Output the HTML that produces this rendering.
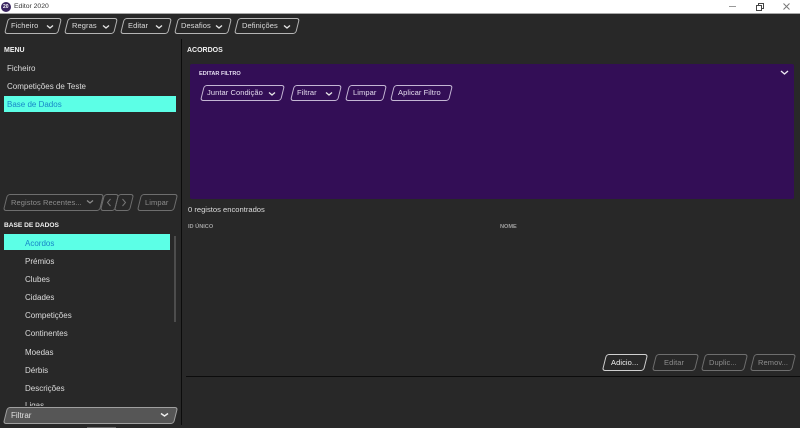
<!DOCTYPE html>
<html lang="pt"><head><meta charset="utf-8"><title>Editor 2020</title>
<style>
html,body{margin:0;padding:0;width:800px;height:428px;overflow:hidden;background:#282828;font-family:"Liberation Sans",sans-serif}
div,span,svg{position:absolute}
.t{white-space:nowrap;font-size:8px;line-height:12px;color:#dcdcdc;margin-top:1px}
.u{font-size:7.5px;letter-spacing:.08px}
.h{white-space:nowrap;font-size:7px;line-height:10px;font-weight:bold;color:#f0f0f0}
.b{border:1px solid #b5b5b5;border-radius:3px;transform:skewX(-14deg);box-sizing:border-box}
.d{border-color:#6e6e6e}
.g{color:#8d8d8d}
.c{fill:none;stroke:#e6e6e6;stroke-width:1.3}
</style></head><body>
<div style="left:0;top:0;width:800px;height:13px;background:#fff"></div>
<div style="left:0;top:13px;width:800px;height:1px;background:#a8a8a8"></div>
<div style="left:1px;top:2px;width:10px;height:10px;border-radius:50%;background:#3a2560"></div>
<span style="left:3px;top:4px;font-size:5px;line-height:6px;color:#fff;font-weight:bold">20</span>
<span style="left:14px;top:1px;font-size:6.8px;line-height:12px;color:#333;white-space:nowrap">Editor 2020</span>
<div style="left:729px;top:6px;width:7px;height:1px;background:#999"></div>
<svg style="left:755px;top:2px" width="10" height="10"><path d="M1.5 3.5h5v5h-5zM3.5 3.5v-2h5v5h-2" fill="none" stroke="#444" stroke-width="1"/></svg>
<svg style="left:782px;top:2px" width="10" height="10"><path d="M1.5 1.5l6 6M7.5 1.5l-6 6" fill="none" stroke="#777" stroke-width="1"/></svg>

<div class="b" style="left:6px;top:18px;width:54px;height:16px"></div><span class="t u" style="left:11px;top:19px">Ficheiro</span>
<svg style="left:46px;top:24px" width="8" height="6"><path class="c" d="M1 1.5l3 2.5 3-2.5"/></svg>
<div class="b" style="left:66px;top:18px;width:50px;height:16px"></div><span class="t u" style="left:72px;top:19px">Regras</span>
<svg style="left:102px;top:24px" width="8" height="6"><path class="c" d="M1 1.5l3 2.5 3-2.5"/></svg>
<div class="b" style="left:122px;top:18px;width:48px;height:16px"></div><span class="t u" style="left:128px;top:19px">Editar</span>
<svg style="left:155px;top:24px" width="8" height="6"><path class="c" d="M1 1.5l3 2.5 3-2.5"/></svg>
<div class="b" style="left:176px;top:18px;width:54px;height:16px"></div><span class="t u" style="left:181px;top:19px">Desafios</span>
<svg style="left:215px;top:24px" width="8" height="6"><path class="c" d="M1 1.5l3 2.5 3-2.5"/></svg>
<div class="b" style="left:236px;top:18px;width:62px;height:16px"></div><span class="t u" style="left:242px;top:19px">Definições</span>
<svg style="left:283px;top:24px" width="8" height="6"><path class="c" d="M1 1.5l3 2.5 3-2.5"/></svg>

<div style="left:181px;top:39px;width:1px;height:386px;background:#0c0c0c"></div>

<span class="h" style="left:4px;top:46px">MENU</span>
<span class="t" style="left:7px;top:62px">Ficheiro</span>
<span class="t" style="left:7px;top:80px">Competições de Teste</span>
<div style="left:4px;top:96px;width:172px;height:16px;background:#5cffe6"></div>
<span class="t" style="left:7px;top:98px;color:#1787c8">Base de Dados</span>

<div class="b d" style="left:5px;top:194px;width:97px;height:17px"></div>
<span class="t u g" style="left:11px;top:196px">Registos Recentes...</span>
<svg style="left:86px;top:199px" width="8" height="6"><path d="M1 1.5l3 2.5 3-2.5" fill="none" stroke="#8d8d8d" stroke-width="1.2"/></svg>
<div class="b d" style="left:102px;top:194px;width:15px;height:17px"></div>
<div class="b d" style="left:116px;top:194px;width:16px;height:17px"></div>
<svg style="left:104px;top:197px" width="10" height="11"><path d="M6.5 2l-3 3.5 3 3.5" fill="none" stroke="#777" stroke-width="1"/></svg>
<svg style="left:119px;top:197px" width="10" height="11"><path d="M3.5 2l3 3.5-3 3.5" fill="none" stroke="#777" stroke-width="1"/></svg>
<div class="b d" style="left:139px;top:194px;width:37px;height:17px"></div>
<span class="t u g" style="left:145px;top:196px">Limpar</span>

<span class="h" style="left:4px;top:221px;font-size:6.6px">BASE DE DADOS</span>
<div style="left:4px;top:234px;width:166px;height:16px;background:#5cffe6"></div>
<span class="t" style="left:25px;top:237px;color:#1787c8">Acordos</span>
<span class="t" style="left:25px;top:255px">Prémios</span>
<span class="t" style="left:25px;top:273px">Clubes</span>
<span class="t" style="left:25px;top:291px">Cidades</span>
<span class="t" style="left:25px;top:309px">Competições</span>
<span class="t" style="left:25px;top:327px">Continentes</span>
<span class="t" style="left:25px;top:346px">Moedas</span>
<span class="t" style="left:25px;top:364px">Dérbis</span>
<span class="t" style="left:25px;top:382px">Descrições</span>
<div style="left:25px;top:402px;width:24px;height:4px;overflow:hidden"><span class="t" style="left:0;top:-3px">Ligas</span></div>
<div style="left:174px;top:236px;width:2px;height:86px;background:#4d4d4d"></div>

<div class="b" style="left:5px;top:407px;width:171px;height:17px;background:#565656;border-color:#a0a0a0"></div>
<span class="t" style="left:11px;top:409px;color:#e0e0e0">Filtrar</span>
<svg style="left:160px;top:412px" width="9" height="6"><path d="M1 1.5l3.5 2.5 3.5-2.5" fill="none" stroke="#f0f0f0" stroke-width="1.4"/></svg>
<div style="left:87px;top:427px;width:29px;height:1px;background:#6a6a6a"></div>

<span class="h" style="left:187px;top:46px">ACORDOS</span>
<div style="left:190px;top:64px;width:604px;height:135px;background:#330e56;border-radius:2px"></div>
<span class="h" style="left:199px;top:69px;font-size:5.6px;color:#e4dcf0">EDITAR FILTRO</span>
<svg style="left:780px;top:70px" width="9" height="6"><path d="M1 1l3.5 3 3.5-3" fill="none" stroke="#ece6f2" stroke-width="1.4"/></svg>
<div class="b" style="left:202px;top:85px;width:81px;height:16px;border-color:#c4b6d4"></div><span class="t u" style="left:207px;top:86px;color:#e4dcee">Juntar Condição</span>
<svg style="left:268px;top:91px" width="8" height="6"><path class="c" d="M1 1.5l3 2.5 3-2.5"/></svg>
<div class="b" style="left:292px;top:85px;width:48px;height:16px;border-color:#c4b6d4"></div><span class="t u" style="left:297px;top:86px;color:#e4dcee">Filtrar</span>
<svg style="left:325px;top:91px" width="8" height="6"><path class="c" d="M1 1.5l3 2.5 3-2.5"/></svg>
<div class="b" style="left:347px;top:85px;width:38px;height:16px;border-color:#c4b6d4"></div><span class="t u" style="left:353px;top:86px;color:#e4dcee">Limpar</span>
<div class="b" style="left:392px;top:85px;width:59px;height:16px;border-color:#c4b6d4"></div><span class="t u" style="left:398px;top:86px;color:#e4dcee">Aplicar Filtro</span>

<span class="t" style="left:188px;top:203px;font-size:7.6px">0 registos encontrados</span>
<span class="h" style="left:188px;top:222px;font-size:5.6px;color:#a0a0a0">ID ÚNICO</span>
<span class="h" style="left:500px;top:222px;font-size:5.6px;color:#a0a0a0">NOME</span>

<div class="b" style="left:604px;top:354px;width:42px;height:17px;border-color:#d0d0d0"></div><span class="t u" style="left:611px;top:356px;color:#f0f0f0">Adicio...</span>
<div class="b d" style="left:654px;top:354px;width:43px;height:17px"></div><span class="t u g" style="left:664px;top:356px">Editar</span>
<div class="b d" style="left:703px;top:354px;width:43px;height:17px"></div><span class="t u g" style="left:709px;top:356px">Duplic...</span>
<div class="b d" style="left:752px;top:354px;width:42px;height:17px"></div><span class="t u g" style="left:758px;top:356px">Remov...</span>

<div style="left:186px;top:376px;width:614px;height:1px;background:#0c0c0c"></div>
</body></html>
